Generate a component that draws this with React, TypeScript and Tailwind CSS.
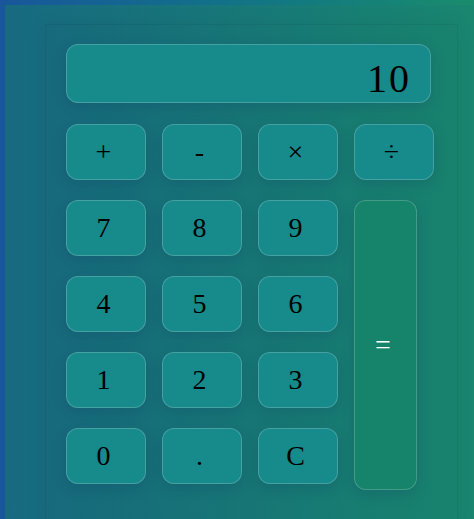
import React, { useState } from 'react';

const keys: { label: string; className?: string }[] = [
  { label: '+' },
  { label: '-' },
  { label: '×' },
  { label: '÷' },
  { label: '7' },
  { label: '8' },
  { label: '9' },
  { label: '=', className: 'row-span-4 h-[290px] w-[63px] bg-[#16846a] text-white' },
  { label: '4' },
  { label: '5' },
  { label: '6' },
  { label: '1' },
  { label: '2' },
  { label: '3' },
  { label: '0' },
  { label: '.' },
  { label: 'C' },
];

const App: React.FC = () => {
  const [display] = useState('10');

  return (
    <div className="h-[519px] w-[474px] overflow-hidden bg-gradient-to-r from-[#19569b] to-[#1a8c6c] pl-[5px] pt-[5px] font-['Liberation_Serif',serif]">
      <div className="h-[540px] w-[480px] bg-gradient-to-r from-[#186a80] to-[#1a876f] pl-[40px] pt-[19px]">
        {/* Corps de la calculatrice */}
        <div className="h-[520px] w-[413px] border border-black/5 bg-black/[0.02] pl-[20px] pt-[19px] shadow-[0_0_20px_rgba(0,0,0,0.06)]">
          <div className="flex h-[59px] w-[365px] items-start justify-end rounded-xl border border-white/20 bg-[#178a8b] pr-[19px] pt-[14px] text-[40px] leading-none tracking-[2px] text-black shadow-[0_4px_14px_rgba(10,40,90,0.18)]">
            {display}
          </div>
          <div className="mt-[21px] grid grid-cols-[repeat(4,80px)] grid-rows-[repeat(5,56px)] gap-x-4 gap-y-5">
            {keys.map((k) => (
              <button
                key={k.label}
                className={`flex items-center justify-center rounded-xl border border-white/20 pr-[5px] text-[28px] leading-none shadow-[0_4px_14px_rgba(10,40,90,0.18)] ${
                  k.className ?? 'h-[56px] w-[80px] bg-[#178a8b] text-black'
                }`}
              >
                {k.label}
              </button>
            ))}
          </div>
        </div>
      </div>
    </div>
  );
};

export default App;
